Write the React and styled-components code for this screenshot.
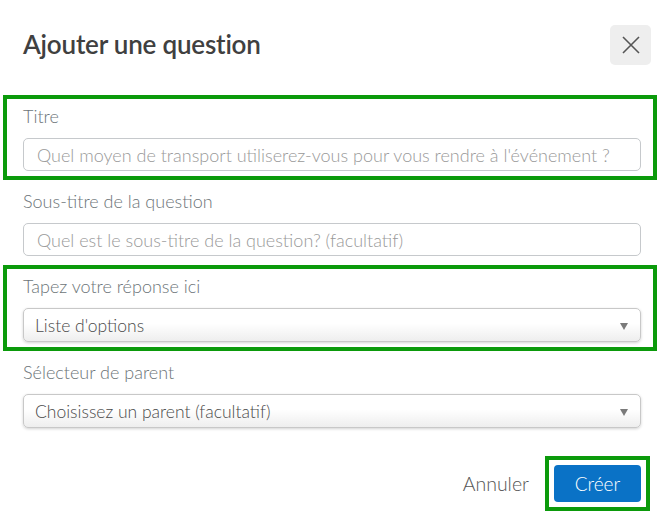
import styled, { createGlobalStyle } from "styled-components";

const GlobalStyle = createGlobalStyle`
    html, body {
        margin: 0;
        padding: 0;
        background: #ffffff;
    }

    body {
        font-family: Lato, "Open Sans", "Liberation Sans", sans-serif;
    }

    * {
        box-sizing: border-box;
    }
`;

const fields = [
    { label: "Titre", kind: "input", placeholder: "Quel moyen de transport utiliserez-vous pour vous rendre à l'événement ?", highlight: true },
    { label: "Sous-titre de la question", kind: "input", placeholder: "Quel est le sous-titre de la question? (facultatif)" },
    { label: "Tapez votre réponse ici", kind: "select", value: "Liste d'options", highlight: true },
    { label: "Sélecteur de parent", kind: "select", value: "Choisissez un parent (facultatif)" },
];

function App () {
    return (
        <>
            <GlobalStyle />
            <Dialog>
                <Header>
                    <Title>Ajouter une question</Title>
                    <CloseButton aria-label="Fermer">
                        <svg width="18" height="18" viewBox="0 0 18 18" fill="none">
                            <path d="M1 1 L17 17 M17 1 L1 17" stroke="#555" strokeWidth="1.6" />
                        </svg>
                    </CloseButton>
                </Header>

                {fields.map((field) => (
                    <Group key={field.label} $highlight={field.highlight}>
                        <Label>{field.label}</Label>
                        {field.kind === "input" ? (
                            <TextInput placeholder={field.placeholder} />
                        ) : (
                            <Select>
                                <span>{field.value}</span>
                                <Arrow />
                            </Select>
                        )}
                    </Group>
                ))}

                <Footer>
                    <CancelButton>Annuler</CancelButton>
                    <Highlight>
                        <PrimaryButton>Créer</PrimaryButton>
                    </Highlight>
                </Footer>
            </Dialog>
        </>
    );
}

const Dialog = styled.div`
    width: 662px;
    height: 529px;
    background: #ffffff;
    display: flex;
    flex-direction: column;
`;

const Header = styled.div`
    display: flex;
    align-items: center;
    justify-content: space-between;
    padding: 25px 11px 0 23px;
    margin-bottom: 30px;
`;

const Title = styled.h2`
    margin: 0;
    font-size: 26px;
    font-weight: 600;
    color: #404040;
    letter-spacing: -0.2px;
    margin-top: -2px;
`;

const CloseButton = styled.button`
    width: 41px;
    height: 40px;
    border: none;
    border-radius: 5px;
    background: #eeeeee;
    display: flex;
    align-items: center;
    justify-content: center;
    padding: 0;
`;

const Group = styled.div`
    margin: 0 5px 0 3px;
    padding: 7px 12px 5px 16px;
    border: 4px solid ${(props) => (props.$highlight ? "#0b9a0b" : "transparent")};
    display: flex;
    flex-direction: column;
    gap: 12px;
`;

const Label = styled.div`
    font-size: 18px;
    font-weight: 300;
    line-height: 20px;
    color: #6c7478;
`;

const TextInput = styled.input`
    height: 33px;
    width: 100%;
    border: 1px solid #c6c9cc;
    border-radius: 5px;
    padding: 0 13px;
    font-family: inherit;
    font-size: 18px;
    font-weight: 300;
    color: #444;
    background: #ffffff;
    outline: none;

    &::placeholder {
        color: #999999;
    }
`;

const Select = styled.div`
    height: 34px;
    border: 1px solid #c8c8c8;
    border-radius: 5px;
    padding: 0 12px 0 11px;
    display: flex;
    align-items: center;
    justify-content: space-between;
    font-size: 17.5px;
    font-weight: 300;
    color: #4a4a4a;
    background: linear-gradient(to bottom, #ffffff 0%, #ffffff 45%, #eeeeee 100%);
    box-shadow: 0 1px 3px rgba(0, 0, 0, 0.18);
`;

const Arrow = styled.span`
    width: 0;
    height: 0;
    border-left: 4px solid transparent;
    border-right: 4px solid transparent;
    border-top: 7px solid #7a7a7a;
    margin-top: 2px;
`;

const Footer = styled.div`
    display: flex;
    align-items: center;
    justify-content: flex-end;
    gap: 16px;
    padding-right: 12px;
    margin-top: 19px;
`;

const CancelButton = styled.button`
    border: none;
    background: none;
    padding: 0;
    font-family: inherit;
    font-size: 19.5px;
    font-weight: 300;
    color: #555555;
`;

const Highlight = styled.div`
    border: 4px solid #0b9a0b;
    padding: 5px;
`;

const PrimaryButton = styled.button`
    width: 87px;
    height: 37px;
    border: none;
    border-radius: 4px;
    background: #0a72c6;
    color: #ffffff;
    font-family: inherit;
    font-size: 19px;
    font-weight: 300;
    padding: 0;
`;

export default App;
